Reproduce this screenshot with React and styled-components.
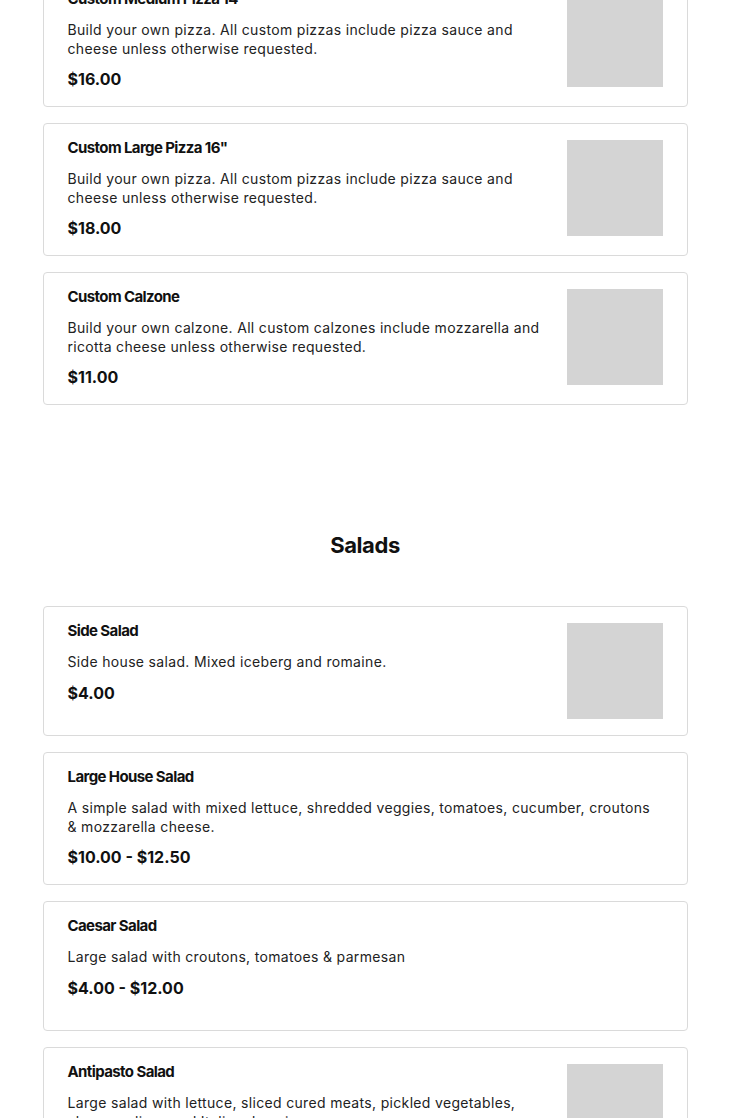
import React from "react";
import styled, { createGlobalStyle } from "styled-components";

const GlobalStyle = createGlobalStyle`
  html, body {
    margin: 0;
    padding: 0;
    background: #ffffff;
    overflow: hidden;
  }
  body {
    font-family: Inter, "Liberation Sans", sans-serif;
    color: #111;
  }
`;

const Page = styled.main`
  width: 645px;
  margin: -26px auto 0;
`;

const Section = styled.section`
  display: flex;
  flex-direction: column;
  gap: 16px;
  padding-bottom: ${(p) => (p.last ? 0 : "126px")};
`;

const SectionTitle = styled.h2`
  margin: 0 0 31px;
  text-align: center;
  font-family: Inter, "Liberation Sans", sans-serif;
  font-size: 22px;
  line-height: 28px;
  font-weight: 700;
  letter-spacing: -0.4px;
  color: #111;
`;

const Card = styled.article`
  display: flex;
  gap: 24px;
  padding: 16px 24px;
  border: 1px solid #dadada;
  border-radius: 4px;
  background: #fff;
`;

const Body = styled.div`
  flex: 1;
  min-height: 96px;
  display: flex;
  flex-direction: column;
`;

const Name = styled.h3`
  margin: 0;
  font-size: 15px;
  line-height: 16px;
  font-weight: 700;
  letter-spacing: -0.6px;
  color: #111;
`;

const Desc = styled.p`
  margin: 14px 0 0;
  font-size: 14px;
  line-height: 18.5px;
  font-weight: 400;
  letter-spacing: 0.33px;
  color: #222;
`;

const Price = styled.div`
  margin-top: 10px;
  font-size: 16px;
  line-height: 22px;
  font-weight: 700;
  color: #111;
`;

const Thumb = styled.div`
  flex: none;
  width: 96px;
  height: 96px;
  background: #d4d4d4;
`;

const pizzas = [
  {
    name: 'Custom Medium Pizza 14"',
    desc: "Build your own pizza. All custom pizzas include pizza sauce and cheese unless otherwise requested.",
    price: "$16.00",
    img: true,
  },
  {
    name: 'Custom Large Pizza 16"',
    desc: "Build your own pizza. All custom pizzas include pizza sauce and cheese unless otherwise requested.",
    price: "$18.00",
    img: true,
  },
  {
    name: "Custom Calzone",
    desc: "Build your own calzone. All custom calzones include mozzarella and ricotta cheese unless otherwise requested.",
    price: "$11.00",
    img: true,
  },
];

const salads = [
  {
    name: "Side Salad",
    desc: "Side house salad. Mixed iceberg and romaine.",
    price: "$4.00",
    img: true,
  },
  {
    name: "Large House Salad",
    desc: "A simple salad with mixed lettuce, shredded veggies, tomatoes, cucumber, croutons & mozzarella cheese.",
    price: "$10.00 - $12.50",
  },
  {
    name: "Caesar Salad",
    desc: "Large salad with croutons, tomatoes & parmesan",
    price: "$4.00 - $12.00",
  },
  {
    name: "Antipasto Salad",
    desc: "Large salad with lettuce, sliced cured meats, pickled vegetables, cheese, olives and Italian dressing.",
    price: "$12.00",
    img: true,
  },
];

function MenuItem({ item }) {
  return (
    <Card>
      <Body>
        <Name>{item.name}</Name>
        <Desc>{item.desc}</Desc>
        <Price>{item.price}</Price>
      </Body>
      {item.img && <Thumb />}
    </Card>
  );
}

export default function App() {
  return (
    <>
      <GlobalStyle />
      <Page>
        <Section>
          {pizzas.map((item) => (
            <MenuItem key={item.name} item={item} />
          ))}
        </Section>
        <Section last>
          <SectionTitle>Salads</SectionTitle>
          {salads.map((item) => (
            <MenuItem key={item.name} item={item} />
          ))}
        </Section>
      </Page>
    </>
  );
}
